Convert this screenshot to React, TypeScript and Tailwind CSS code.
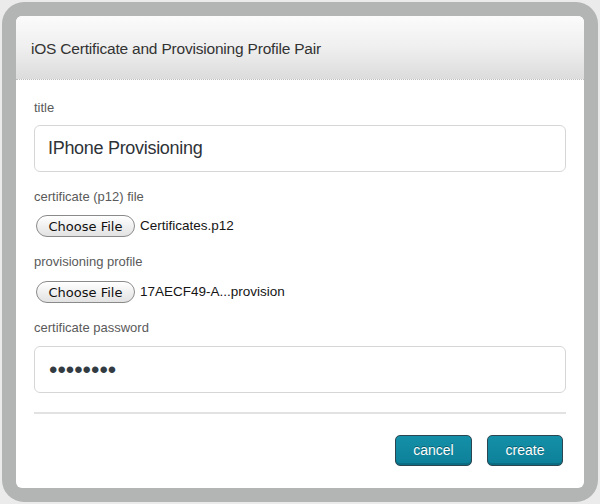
import React from 'react';

const FileField: React.FC<{ fileName: string }> = ({ fileName }) => (
    <div className="flex items-center h-[22px]">
        <button
            type="button"
            className="h-[22px] w-[99px] ml-[2px] rounded-full border border-[#8a8a8a] bg-gradient-to-b from-[#ffffff] to-[#e2e2e2] text-[13px] text-[#111] font-['DejaVu_Sans',sans-serif] leading-none shadow-[inset_0_1px_0_#fff]"
        >
            Choose File
        </button>
        <span className="ml-[5px] text-[13.5px] text-[#151515]">{fileName}</span>
    </div>
);

export default function App() {
    return (
        <div className="w-[600px] h-[504px] bg-[#ebebeb] p-[2px] font-['Liberation_Sans',Arial,sans-serif]">
            <div className="w-[596px] h-[500px] rounded-[22px] bg-[#b3b5b4] p-[14px]">
                <div className="h-[472px] rounded-[6px] bg-white overflow-hidden flex flex-col">
                    <div className="h-[64px] shrink-0 flex items-center pl-[15px] pt-[2px] bg-gradient-to-b from-[#fbfbfb] via-[#efefef] to-[#dcdcdc] border-b border-dotted border-[#bdbdbd]">
                        <h1 className="text-[15.5px] text-[#333] tracking-[-0.2px]">
                            iOS Certificate and Provisioning Profile Pair
                        </h1>
                    </div>

                    <div className="flex flex-col px-[18px] pt-[20px] pb-[22px]">
                        <label className="text-[13px] leading-[16px] text-[#5a5a5a]">title</label>
                        <input
                            type="text"
                            readOnly
                            defaultValue="IPhone Provisioning"
                            className="mt-[9px] h-[47px] w-full rounded-[6px] border border-[#d6d6d6] px-[13px] text-[18px] tracking-[-0.3px] text-[#2e3338] outline-none font-['Liberation_Sans',Arial,sans-serif]"
                        />

                        <label className="mt-[17px] text-[13px] leading-[16px] text-[#5a5a5a]">certificate (p12) file</label>
                        <div className="mt-[10px]">
                            <FileField fileName="Certificates.p12" />
                        </div>

                        <label className="mt-[17px] text-[13px] leading-[16px] text-[#5a5a5a]">provisioning profile</label>
                        <div className="mt-[11px]">
                            <FileField fileName="17AECF49-A...provision" />
                        </div>

                        <label className="mt-[17px] text-[13px] leading-[16px] text-[#5a5a5a]">certificate password</label>
                        <input
                            type="password"
                            readOnly
                            defaultValue="12345678"
                            className="mt-[10px] h-[47px] w-full rounded-[6px] border border-[#d6d6d6] px-[14px] text-[24px] text-[#333b42] outline-none font-['Liberation_Sans',Arial,sans-serif]"
                        />

                        <hr className="mt-[19px] border-t-2 border-[#e2e2e2]" />

                        <div className="mt-[21px] flex justify-end gap-[15px] pr-[3px]">
                            <button
                                type="button"
                                className="h-[31px] w-[77px] rounded-[5px] border border-[#2b4650] bg-gradient-to-b from-[#1490a8] to-[#0d8098] text-[14px] text-white [text-shadow:0_-1px_0_rgba(0,0,0,0.35)] shadow-[inset_0_-2px_0_rgba(0,0,0,0.15)]"
                            >
                                cancel
                            </button>
                            <button
                                type="button"
                                className="h-[31px] w-[76px] rounded-[5px] border border-[#2b4650] bg-gradient-to-b from-[#1490a8] to-[#0d8098] text-[14px] text-white [text-shadow:0_-1px_0_rgba(0,0,0,0.35)] shadow-[inset_0_-2px_0_rgba(0,0,0,0.15)]"
                            >
                                create
                            </button>
                        </div>
                    </div>
                </div>
            </div>
        </div>
    );
}
